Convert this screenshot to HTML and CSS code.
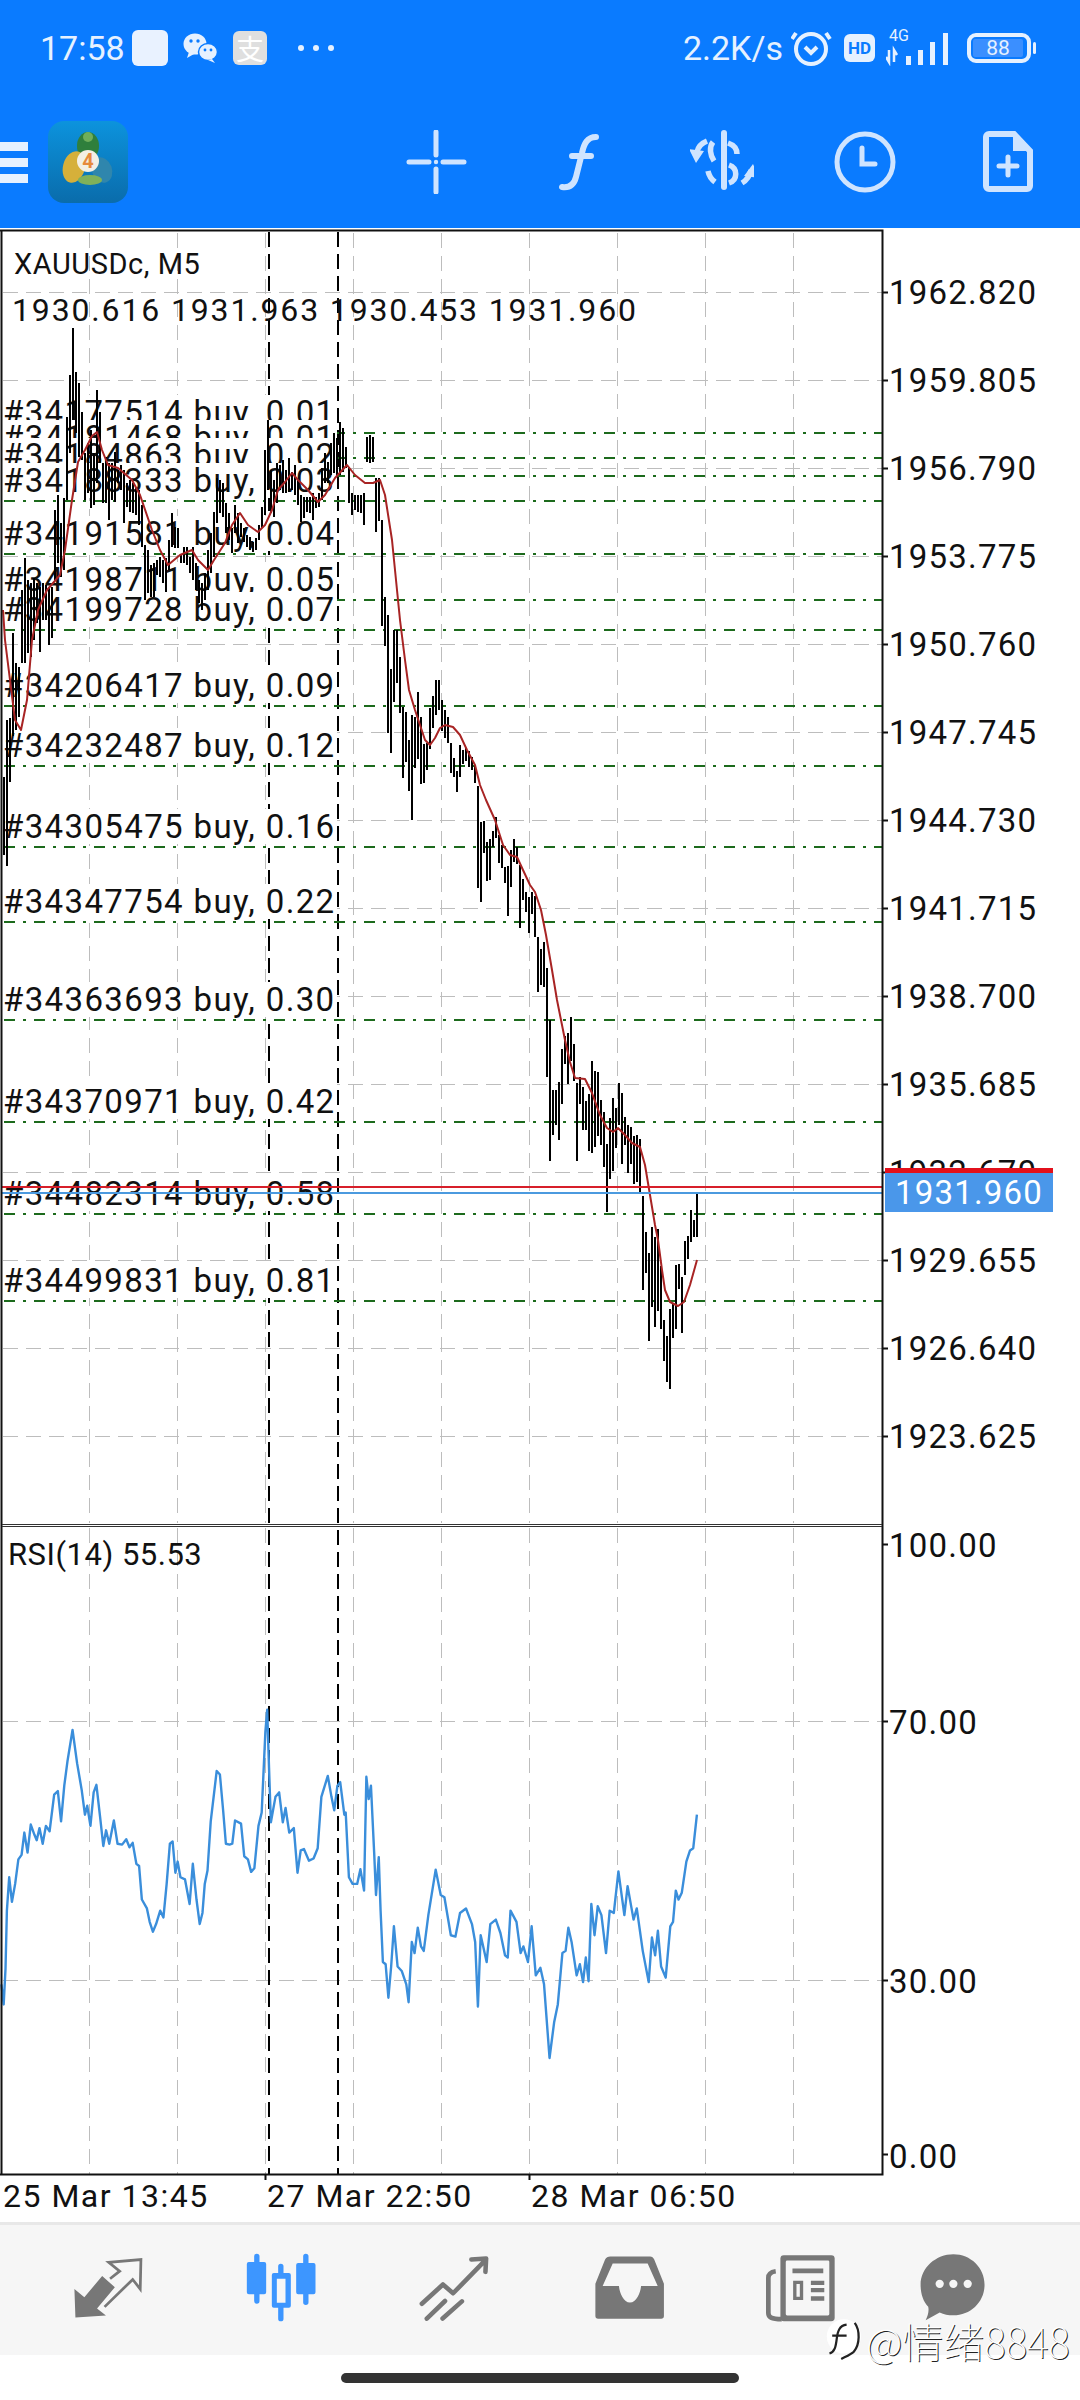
FILE: index.html
```html
<!DOCTYPE html>
<html lang="en">
<head>
<meta charset="utf-8">
<title>XAUUSDc, M5</title>
<link rel="stylesheet" href="styles.css">
</head>
<body>
<div class="screen">
  <header class="topbar">
    <div class="status">
      <span class="clock-text">17:58</span>
      <span class="blank-app"></span>
      <svg class="wechat" viewBox="183 32 36 32"><ellipse cx="195" cy="44" rx="11.5" ry="10.5"/><path d="M189 52l-2 6 7-4z"/><ellipse cx="208" cy="52" rx="9.5" ry="8.5" class="wechat-front"/><path d="M212 59l3 4-7-3z"/><circle cx="191" cy="41" r="1.7" class="wechat-eye"/><circle cx="198" cy="41" r="1.7" class="wechat-eye"/><circle cx="205" cy="50" r="1.4" class="wechat-eye"/><circle cx="211" cy="50" r="1.4" class="wechat-eye"/></svg>
      <span class="alipay">支</span>
      <span class="more-dots"><i></i><i></i><i></i></span>
      <span class="status-right">
        <span class="speed">2.2K/s</span>
        <svg class="alarm" viewBox="789 30 42 40"><circle cx="809" cy="51" r="15"/><path d="M794 35l-4 6M824 35l4 6M803 49l6 6 6-6"/></svg>
        <span class="hd">HD</span>
        <span class="signal">
          <span class="net">4G</span>
          <svg viewBox="883 30 67 36"><path class="sig-arrow" d="M886 50v12l-3-5M891 62V50l3 5"/><path class="sig-bar" d="M903 56h5v9h-5zM915 50h5v15h-5zM927 42h5v23h-5zM940 33h5v32h-5z"/></svg>
        </span>
        <span class="battery"><span class="battery-fill">88</span></span>
      </span>
    </div>
    <div class="toolbar">
      <span class="menu"><i></i><i></i><i></i></span>
      <svg class="app-logo" viewBox="48 121 80 82">
        <defs><linearGradient id="logoBg" x1="0" y1="0" x2="0" y2="1"><stop offset="0" stop-color="#0c93dd"/><stop offset="1" stop-color="#0a6cab"/></linearGradient></defs>
        <rect x="48" y="121" width="80" height="82" rx="16" fill="url(#logoBg)"/>
        <ellipse cx="88" cy="146" rx="11" ry="14" fill="#2f7f3c"/>
        <circle cx="88" cy="137" r="5" fill="#6fae5a"/>
        <ellipse cx="74" cy="167" rx="11" ry="16" fill="#d6b03a" transform="rotate(15 74 167)"/>
        <ellipse cx="102" cy="170" rx="10" ry="13" fill="#2f86ad" transform="rotate(-20 102 170)"/>
        <ellipse cx="90" cy="180" rx="12" ry="5" fill="#7fb15a"/>
        <circle cx="88" cy="161" r="11" fill="#f3efe4"/>
        <text x="88" y="168" class="logo-four">4</text>
      </svg>
      <div class="tools">
        <svg class="tool" viewBox="404 130 64 64"><path d="M436 132v23M436 169v23M409 162h20M443 162h21"/><circle cx="436" cy="162" r="2.2" class="tool-fill"/></svg>
        <svg class="tool" viewBox="547 130 64 64"><path class="tool-thick" d="M596 137c-9 0-12 7-14 16l-6 24c-2 8-7 11-14 10M572 156h19"/></svg>
        <svg class="tool" viewBox="690 130 64 64"><path class="tool-thick" d="M724 133v54"/><path class="tool-thin" d="M713 142c-4 5-3 13 1 19M728 143c6 2 9 6 9 11M708 171c1 5 3 8 7 11M729 165c9 3 9 15 0 18"/><path class="tool-thin" d="M707 141c-5 2-9 6-10 11M742 183c5-3 8-8 9-13"/><path class="tool-fill" d="M689 149l15 2-8 12zM759 178l-15-2 9-12z"/></svg>
        <svg class="tool" viewBox="833 130 64 64"><circle cx="865" cy="162" r="28"/><path d="M862 148v16h13"/></svg>
        <svg class="tool" viewBox="976 130 64 64"><path class="tool-file" d="M989 134h25l16 17v35a3 3 0 0 1-3 3h-38a3 3 0 0 1-3-3v-49a3 3 0 0 1 3-3z"/><path class="tool-fill" d="M1013 133l18 18h-18z"/><path d="M1008 157v18M999 166h18"/></svg>
      </div>
    </div>
  </header>

  <main class="chart">
    <svg class="layer" viewBox="0 228 1080 1994">
      <path class="grid-line" d="M89.5 233V1523M177.5 233V1523M265.5 233V1523M353.5 233V1523M441.5 233V1523M529.5 233V1523M617.5 233V1523M705.5 233V1523M793.5 233V1523M89.5 1528V2174M177.5 1528V2174M265.5 1528V2174M353.5 1528V2174M441.5 1528V2174M529.5 1528V2174M617.5 1528V2174M705.5 1528V2174M793.5 1528V2174"/>
      <path class="grid-line" d="M3 292.5H882M3 380.5H882M3 468.5H882M3 556.5H882M3 644.5H882M3 732.5H882M3 820.5H882M3 908.5H882M3 996.5H882M3 1084.5H882M3 1172.5H882M3 1260.5H882M3 1348.5H882M3 1436.5H882M3 1721.5H882M3 1980.5H882"/>
      <path class="period-line" d="M269 232V2174M338 232V2174"/>
      <path class="order-line" d="M4 433H882M4 458H882M4 476H882M4 501H882M4 554H882M4 600H882M4 630H882M4 706H882M4 766H882M4 847H882M4 922H882M4 1020H882M4 1122H882M4 1214H882M4 1301H882"/>
    </svg>

    <div class="quote-title">XAUUSDc, M5</div>
    <div class="quote-ohlc">1930.616 1931.963 1930.453 1931.960</div>
    <div class="rsi-title">RSI(14) 55.53</div>

    <span class="order" style="top:167px">#34177514 buy, 0.01</span>
    <span class="order" style="top:192px">#34181468 buy, 0.01</span>
    <span class="order" style="top:210px">#34184863 buy, 0.02</span>
    <span class="order" style="top:235px">#34188333 buy, 0.03</span>
    <span class="order" style="top:288px">#34191581 buy, 0.04</span>
    <span class="order" style="top:334px">#34198711 buy, 0.05</span>
    <span class="order" style="top:364px">#34199728 buy, 0.07</span>
    <span class="order" style="top:440px">#34206417 buy, 0.09</span>
    <span class="order" style="top:500px">#34232487 buy, 0.12</span>
    <span class="order" style="top:581px">#34305475 buy, 0.16</span>
    <span class="order" style="top:656px">#34347754 buy, 0.22</span>
    <span class="order" style="top:754px">#34363693 buy, 0.30</span>
    <span class="order" style="top:856px">#34370971 buy, 0.42</span>
    <span class="order" style="top:948px">#34482314 buy, 0.58</span>
    <span class="order" style="top:1035px">#34499831 buy, 0.81</span>

    <svg class="layer" viewBox="0 228 1080 1994">
      <path class="bars" d="M4 777V855M7 720V866M10 718V782M13 633V736M16 663V730M19 667V717M22 590V663M25 558V663M28 580V653M31 583V657M34 578V640M37 583V623M40 587V652M43 583V620M46 585V620M49 587V645M52 587V638M55 510V580M58 495V563M61 523V577M64 498V570M67 417V500M70 375V453M73 328V420M76 372V433M79 383V457M82 412V460M85 453V500M88 443V493M91 430V508M94 453V505M97 390V483M100 412V463M103 463V503M106 457V503M109 463V520M112 463V500M115 452V502M118 470V483M121 465V490M124 470V523M127 483V507M130 480V512M133 483V513M136 487V515M139 490V525M142 505V547M145 545V600M148 550V593M151 565V597M154 563V597M157 560V575M160 557V577M163 560V583M166 558V592M169 540V570M172 513V547M175 527V548M178 528V548M181 555V563M184 547V563M187 547V565M190 557V573M193 547V580M196 563V590M199 580V603M202 583V610M205 573V600M208 550V590M211 533V573M214 512V557M217 478V523M220 480V513M223 483V517M226 503V533M229 513V540M232 528V553M235 505V533M238 513V543M241 523V537M244 528V542M247 535V547M250 537V550M253 542V552M256 538V550M259 525V540M262 507V528M265 450V515M268 420V490M271 470V513M274 480V517M277 463V503M280 465V490M283 460V493M286 470V493M289 458V492M292 472V490M295 465V495M298 480V505M301 495V522M304 497V518M307 497V512M310 497V513M313 493V520M316 497V508M319 493V507M322 468V500M325 453V483M328 462V483M331 443V475M334 433V473M337 438V477M340 422V475M343 428V472M346 447V468M349 467V503M352 493V515M355 495V510M358 495V512M361 495V513M364 493V525M367 437V462M370 435V463M373 437V462M376 478V532M379 478V521M382 520V626M385 597V646M388 615V733M391 669V753M394 630V702M397 630V683M400 657V713M403 707V778M406 712V762M409 740V791M412 715V820M415 717V768M418 692V759M421 717V784M424 744V783M427 743V770M430 708V749M433 696V728M436 680V715M439 680V710M442 700V731M445 710V738M448 717V743M451 743V773M454 758V777M457 771V792M460 745V777M463 750V764M466 748V761M469 751V767M472 757V770M475 765V783M478 786V888M481 822V902M484 821V853M487 842V881M490 839V880M493 831V847M496 817V838M499 835V863M502 845V868M505 867V883M508 866V916M511 850V887M514 839V862M517 847V864M520 865V928M523 879V900M526 892V912M529 897V933M532 892V914M535 896V937M538 937V992M541 949V985M544 942V987M547 968V1077M550 1020V1161M553 1090V1135M556 1090V1125M559 1082V1140M562 1049V1104M565 1036V1064M568 1033V1084M571 1017V1061M574 1044V1081M577 1083V1161M580 1077V1104M583 1087V1130M586 1101V1130M589 1094V1151M592 1061V1153M595 1071V1147M598 1072V1136M601 1100V1145M604 1112V1167M607 1144V1212M610 1118V1179M613 1098V1171M616 1108V1148M619 1083V1125M622 1093V1164M625 1117V1145M628 1125V1173M631 1127V1164M634 1136V1184M637 1135V1182M640 1139V1193M643 1196V1290M646 1232V1273M649 1253V1341M652 1227V1307M655 1237V1327M658 1229V1311M661 1266V1329M664 1320V1361M667 1336V1382M670 1309V1389M673 1304V1338M676 1265V1329M679 1264V1289M682 1277V1333M685 1241V1275M688 1236V1259M691 1210V1242M694 1220V1237M697 1193V1237"/>
      <polyline class="ma" points="3,610 5,640 10,680 15,720 21,730 27,700 32,640 38,610 47,590 60,575 65,550 72,500 78,462 85,450 92,436 97,432 102,450 108,465 118,468 132,480 140,495 152,530 160,550 168,565 180,555 192,550 198,560 208,570 214,560 225,543 232,525 240,513 248,525 258,532 265,525 272,510 278,490 285,482 292,473 298,480 308,490 318,502 325,495 335,478 347,465 355,475 365,483 373,483 380,480 385,495 392,540 400,620 405,660 409,690 415,710 420,725 425,740 430,745 435,738 440,728 445,725 453,727 460,735 467,750 475,765 480,785 486,800 495,820 503,845 510,855 517,857 523,870 530,885 535,892 541,910 546,935 552,970 557,1000 565,1040 570,1062 575,1078 585,1079 592,1093 600,1115 607,1128 613,1132 618,1128 625,1135 632,1143 640,1147 645,1165 650,1195 655,1225 658,1240 662,1270 665,1290 670,1302 678,1306 684,1302 690,1285 697,1260"/>
      <path class="ask-line" d="M2 1187H882"/>
      <path class="bid-line" d="M2 1193H882"/>
      <g transform="translate(0 1500) scale(.4591 .4464)">
        <polyline class="rsi" points="3,1085 8,1130 12,1050 15,920 20,845 26,900 33,860 40,805 47,795 53,745 60,790 67,727 75,750 80,762 86,735 93,770 100,730 108,742 118,660 126,652 133,720 140,640 147,585 158,515 168,590 178,650 185,705 190,685 197,730 204,655 210,638 218,710 225,775 231,740 238,770 248,718 256,770 266,772 275,760 282,778 289,768 297,815 303,820 309,895 320,915 326,945 333,967 340,950 349,920 356,935 363,860 370,770 376,765 382,835 387,810 393,845 403,850 413,905 420,815 428,895 435,950 441,925 446,860 452,830 459,720 472,607 479,615 486,695 492,770 500,772 506,770 512,718 525,725 532,798 540,805 547,833 554,825 563,730 570,700 578,520 582,470 586,600 590,722 600,665 608,655 616,722 622,690 630,745 640,735 648,835 655,785 662,782 673,808 683,803 692,780 700,665 714,618 722,665 728,695 735,640 741,632 750,705 753,700 760,845 768,860 778,860 785,827 793,875 798,620 803,670 808,640 815,790 819,885 825,800 829,920 834,1035 840,1040 846,1115 852,1045 858,955 866,1045 875,1055 885,1085 890,1125 897,990 903,1015 910,958 917,1000 923,1010 933,930 949,828 960,885 968,890 982,975 992,978 1002,925 1015,915 1028,950 1035,990 1041,1135 1047,975 1060,1035 1068,950 1080,940 1090,970 1100,1020 1106,1025 1112,920 1125,945 1134,1015 1140,1000 1150,1035 1158,955 1167,1065 1177,1048 1185,1085 1197,1250 1207,1170 1215,1130 1225,1015 1232,1010 1238,958 1245,990 1256,1065 1263,1040 1270,1080 1276,1025 1282,1078 1288,905 1295,975 1302,910 1310,930 1320,1015 1328,920 1337,925 1347,832 1360,930 1367,865 1380,940 1387,915 1400,1010 1413,1080 1420,980 1427,1020 1433,965 1440,1045 1450,1070 1460,955 1466,945 1472,875 1478,895 1485,880 1495,810 1503,785 1510,780 1518,705"/>
      </g>
      <path class="frame" d="M0 230.5H882.5V2174.5H0M1.5 230V2175"/>
      <path class="divider" d="M2 1524.5H882M2 1526.5H882"/>
      <path class="frame" d="M882 292.5h6M882 380.5h6M882 468.5h6M882 556.5h6M882 644.5h6M882 732.5h6M882 820.5h6M882 908.5h6M882 996.5h6M882 1084.5h6M882 1172.5h6M882 1260.5h6M882 1348.5h6M882 1436.5h6M882 1544.5h6M882 1721.5h6M882 1980.5h6M882 2154.5h6M265.5 2174v6M529.5 2174v6"/>
    </svg>

    <div class="price-axis">
      <span>1962.820</span><span>1959.805</span><span>1956.790</span><span>1953.775</span><span>1950.760</span><span>1947.745</span><span>1944.730</span><span>1941.715</span><span>1938.700</span><span>1935.685</span><span>1932.670</span><span>1929.655</span><span>1926.640</span><span>1923.625</span>
    </div>
    <span class="rsi-label" style="top:1299px">100.00</span>
    <span class="rsi-label" style="top:1476px">70.00</span>
    <span class="rsi-label" style="top:1735px">30.00</span>
    <span class="rsi-label" style="top:1910px">0.00</span>
    <div class="price-tag"><span>1931.960</span></div>
    <div class="time-axis"><span>25 Mar 13:45</span><span>27 Mar 22:50</span><span>28 Mar 06:50</span></div>
  </main>

  <nav class="nav">
    <svg class="nav-icon" viewBox="40 25 210 180"><path class="nav-fill" d="M47 118l29 24 52-62 37 33-52 62 26 20-89 6z"/><path class="nav-stroke" d="M135 170l82-80 22 28 2-86-94 8 32 26-28 22"/></svg>
    <svg class="nav-icon" viewBox="555 8 215 210"><path class="candle-fill" d="M566 35h16V18a8 8 0 0 1 16 0v17h14a6 6 0 0 1 6 6v85a6 6 0 0 1-6 6h-14v20a8 8 0 0 1-16 0v-20h-16a6 6 0 0 1-6-6V41a6 6 0 0 1 6-6zM714 38h15V18a8 8 0 0 1 16 0v20h15a6 6 0 0 1 6 6v82a6 6 0 0 1-6 6h-15v24a8 8 0 0 1-16 0v-24h-15a6 6 0 0 1-6-6V44a6 6 0 0 1 6-6z"/><path class="candle-fill" fill-rule="evenodd" d="M641 68h13V48a8 8 0 0 1 16 0v20h16a6 6 0 0 1 6 6v92a6 6 0 0 1-6 6h-16v33a8 8 0 0 1-16 0v-33h-13a6 6 0 0 1-6-6V74a6 6 0 0 1 6-6zM650 85v72h26V85z"/></svg>
    <svg class="nav-icon" viewBox="1080 15 205 190"><path class="nav-stroke-wide" d="M1091 155l60-55 29 25 90-92M1232 29l42-3-2 38M1105 197l52-50M1150 197l55-49"/></svg>
    <svg class="nav-icon nav-icon-inbox" viewBox="38 16 208 190"><path class="nav-fill" fill-rule="evenodd" d="M85 20h115c6 0 9 3 12 9l28 70v93c0 5-3 8-8 8H50c-5 0-8-3-8-8V99l28-70c3-6 8-9 15-9zM92 40L63 105h47c2 22 14 48 32 48s30-26 32-48h48l-29-65z"/></svg>
    <svg class="nav-icon" viewBox="555 8 215 204"><rect class="nav-fill" x="604" y="12" width="162" height="197" rx="10"/><path class="nav-line" d="M590 60c-15 2-22 8-22 20v105c0 12 8 18 40 18"/><rect class="nav-page" x="620" y="28" width="130" height="164" rx="4"/><path class="nav-fill" fill-rule="evenodd" d="M640 52h92v14h-92zM642 88h30v58h-30zM652 98v38h10V98zM695 88h40v13h-40zM695 110h40v13h-40zM695 135h40v13h-40z"/></svg>
    <svg class="nav-icon nav-icon-last" viewBox="1015 8 210 220"><path class="nav-fill" d="M1118 12c54 0 98 42 98 96s-44 96-98 96c-16 0-30-3-43-9l-44 24c7-14 11-28 8-42-16-17-24-41-24-69 0-54 49-96 103-96z"/><circle class="nav-dot" cx="1075" cy="105" r="13"/><circle class="nav-dot" cx="1118" cy="105" r="13"/><circle class="nav-dot" cx="1163" cy="105" r="13"/></svg>
  </nav>
  <div class="home"><span class="home-bar"></span></div>

  <div class="watermark">
    <svg class="mark-logo" viewBox="0 0 40 50"><circle cx="21" cy="21" r="19" class="mark-disc"/><path class="mark-path" d="M5 40c6-2 7-8 8-16 1-9 3-15 11-16M8 20h16M33 6c6 8 6 24-1 32-3 3-8 5-14 8"/></svg>
    <span class="mark-text">@情绪8848</span>
  </div>
</div>
</body>
</html>
```

FILE: styles.css
```css
* { box-sizing: border-box; }
html, body { margin: 0; padding: 0; background: #fff; }
body { font-family: Roboto, "Noto Sans CJK SC", sans-serif; color: #111; }
.screen { position: relative; width: 1080px; height: 2400px; display: flex; flex-direction: column; overflow: hidden; background: #fff; }

/* top bar */
.topbar { height: 228px; flex: none; background: #0a7bff; color: #e6f1ff; }
.status { height: 96px; display: flex; align-items: center; padding: 0 49px 0 40px; }
.clock-text { font-size: 34px; width: 84px; white-space: nowrap; }
.blank-app { width: 36px; height: 36px; margin-left: 8px; border-radius: 6px; background: #e9f2ff; }
.wechat { width: 36px; height: 32px; margin-left: 15px; fill: #e6f1ff; }
.wechat-front { stroke: #0a7bff; stroke-width: 1.5; }
.wechat-eye { fill: #0a7bff; }
.alipay { width: 34px; height: 34px; margin-left: 14px; border-radius: 6px; background: #dfdfdf; color: #fff; font-size: 28px; line-height: 34px; text-align: center; font-family: "Noto Sans CJK SC", sans-serif; }
.more-dots { display: flex; gap: 9px; margin-left: 31px; }
.more-dots i { width: 6px; height: 6px; border-radius: 50%; background: #e6f1ff; }
.status-right { display: flex; align-items: center; margin-left: auto; }
.speed { font-size: 34px; white-space: nowrap; margin-right: 1px; }
.alarm { width: 42px; height: 40px; margin-left: 7px; fill: none; stroke: #e6f1ff; stroke-width: 4; }
.hd { width: 31px; height: 28px; margin-left: 11px; border-radius: 6px; background: #e6f1ff; color: #0a7bff; font-size: 17px; font-weight: 700; line-height: 28px; text-align: center; }
.signal { position: relative; width: 67px; height: 36px; margin-left: 11px; }
.signal svg { display: block; width: 67px; height: 36px; }
.net { position: absolute; left: 3px; top: -3px; font-size: 16px; line-height: 18px; }
.sig-arrow { fill: none; stroke: #e6f1ff; stroke-width: 2.5; }
.sig-bar { fill: #e6f1ff; }
.battery { position: relative; width: 64px; height: 30px; margin-left: 14px; border: 4px solid #e6f1ff; border-radius: 9px; padding: 2px; }
.battery::after { content: ""; position: absolute; right: -9px; top: 5px; width: 3px; height: 12px; border-radius: 2px; background: #e6f1ff; }
.battery-fill { display: block; height: 100%; width: 50px; background: #3b8fff; border-radius: 2px; font-size: 21px; line-height: 18px; text-align: center; color: #e6f1ff; }

.toolbar { height: 132px; display: flex; align-items: center; }
.menu { width: 28px; display: flex; flex-direction: column; gap: 7px; }
.menu i { height: 9px; background: #e6f1ff; }
.app-logo { width: 80px; height: 82px; margin-left: 20px; }
.logo-four { font-family: Roboto, sans-serif; font-size: 20px; font-weight: 700; fill: #e68a3c; text-anchor: middle; }
.tools { display: flex; gap: 79px; margin-left: auto; padding-right: 40px; }
.tool { width: 64px; height: 64px; fill: none; stroke: #cfe4ff; stroke-width: 5; stroke-linecap: round; }
.tool-thick { stroke-width: 6; }
.tool-thin { stroke-width: 5.5; stroke-linecap: butt; }
.tool-fill { fill: #cfe4ff; stroke: none; }
.tool-file { fill: none; stroke-width: 6; stroke-linecap: butt; }

/* chart */
.chart { position: relative; flex: none; height: 1994px; background: #fff; }
.layer { position: absolute; left: 0; top: 0; width: 1080px; height: 1994px; fill: none; }
.grid-line { stroke: #bdbdbd; stroke-width: 1; stroke-dasharray: 15 8; }
.period-line { stroke: #000; stroke-width: 2; stroke-dasharray: 15 7; }
.order-line { stroke: #1c6a1c; stroke-width: 2; stroke-dasharray: 11 8 3 8; }
.order { position: absolute; left: 3px; height: 35px; padding-right: 1px; background: #fff; font-size: 33px; line-height: 35px; letter-spacing: 1.37px; white-space: nowrap; }
.quote-title { position: absolute; left: 14px; top: 18px; font-size: 29px; line-height: 36px; letter-spacing: .55px; white-space: nowrap; }
.quote-ohlc { position: absolute; left: 12px; top: 64px; font-size: 32px; line-height: 36px; letter-spacing: 1.85px; white-space: nowrap; }
.rsi-title { position: absolute; left: 8px; top: 1309px; font-size: 31px; line-height: 36px; letter-spacing: .5px; white-space: nowrap; }
.bars { stroke: #000; stroke-width: 2; }
.ma { stroke: #a82424; stroke-width: 2; fill: none; stroke-linejoin: round; }
.ask-line { stroke: #d71f2a; stroke-width: 2; }
.bid-line { stroke: #4b9adf; stroke-width: 2; }
.rsi { stroke: #3a8edb; stroke-width: 2.4; fill: none; vector-effect: non-scaling-stroke; stroke-linejoin: round; }
.frame { stroke: #111; stroke-width: 2; }
.divider { stroke: #333; stroke-width: 1; }

.price-axis { position: absolute; left: 889px; top: 20px; display: grid; grid-auto-rows: 88px; align-items: center; font-size: 33px; letter-spacing: 1.2px; white-space: nowrap; }
.rsi-label { position: absolute; left: 889px; font-size: 33px; line-height: 38px; letter-spacing: 1.2px; white-space: nowrap; }
.price-tag { position: absolute; left: 885px; top: 940px; width: 168px; height: 44px; background: #4a97ea; border-top: 5px solid #e2101c; color: #fff; font-size: 33px; line-height: 40px; letter-spacing: 1.2px; text-align: center; }
.time-axis { position: absolute; left: 3px; bottom: 7px; display: grid; grid-template-columns: repeat(3, 264px); font-size: 32px; line-height: 38px; letter-spacing: 1.5px; white-space: nowrap; }

/* bottom nav */
.nav { flex: none; height: 133px; padding: 28px 0 0 21px; background: #f6f6f6; border-top: 3px solid #e8e8e8; display: grid; grid-template-columns: repeat(6, 173px); justify-items: center; align-items: start; }
.nav-icon { width: 72px; height: 70px; }
.nav-icon-inbox { margin-left: 6px; }
.nav-icon-last { margin-right: 38px; }
.nav-fill { fill: #777; }
.nav-stroke { fill: none; stroke: #777; stroke-width: 8; }
.nav-stroke-wide { fill: none; stroke: #777; stroke-width: 13; stroke-linecap: round; stroke-linejoin: round; }
.nav-line { fill: none; stroke: #777; stroke-width: 14; }
.nav-page { fill: #f6f6f6; }
.nav-dot { fill: #f6f6f6; }
.candle-fill { fill: #3d96ff; }
.home { flex: 1; display: flex; justify-content: center; padding-top: 18px; background: #fff; }
.home-bar { width: 398px; height: 10px; border-radius: 5px; background: #333; }

/* watermark */
.watermark { position: absolute; left: 825px; top: 2317px; display: flex; align-items: center; gap: 5px; }
.mark-logo { width: 36px; height: 46px; }
.mark-disc { fill: #fff; }
.mark-path { fill: none; stroke: #222; stroke-width: 2.5; }
.mark-text { font-family: "Noto Sans CJK SC", sans-serif; font-size: 41px; font-weight: 100; line-height: 44px; color: #fff; text-shadow: 1px 1px 0 #222; white-space: nowrap; }
```
